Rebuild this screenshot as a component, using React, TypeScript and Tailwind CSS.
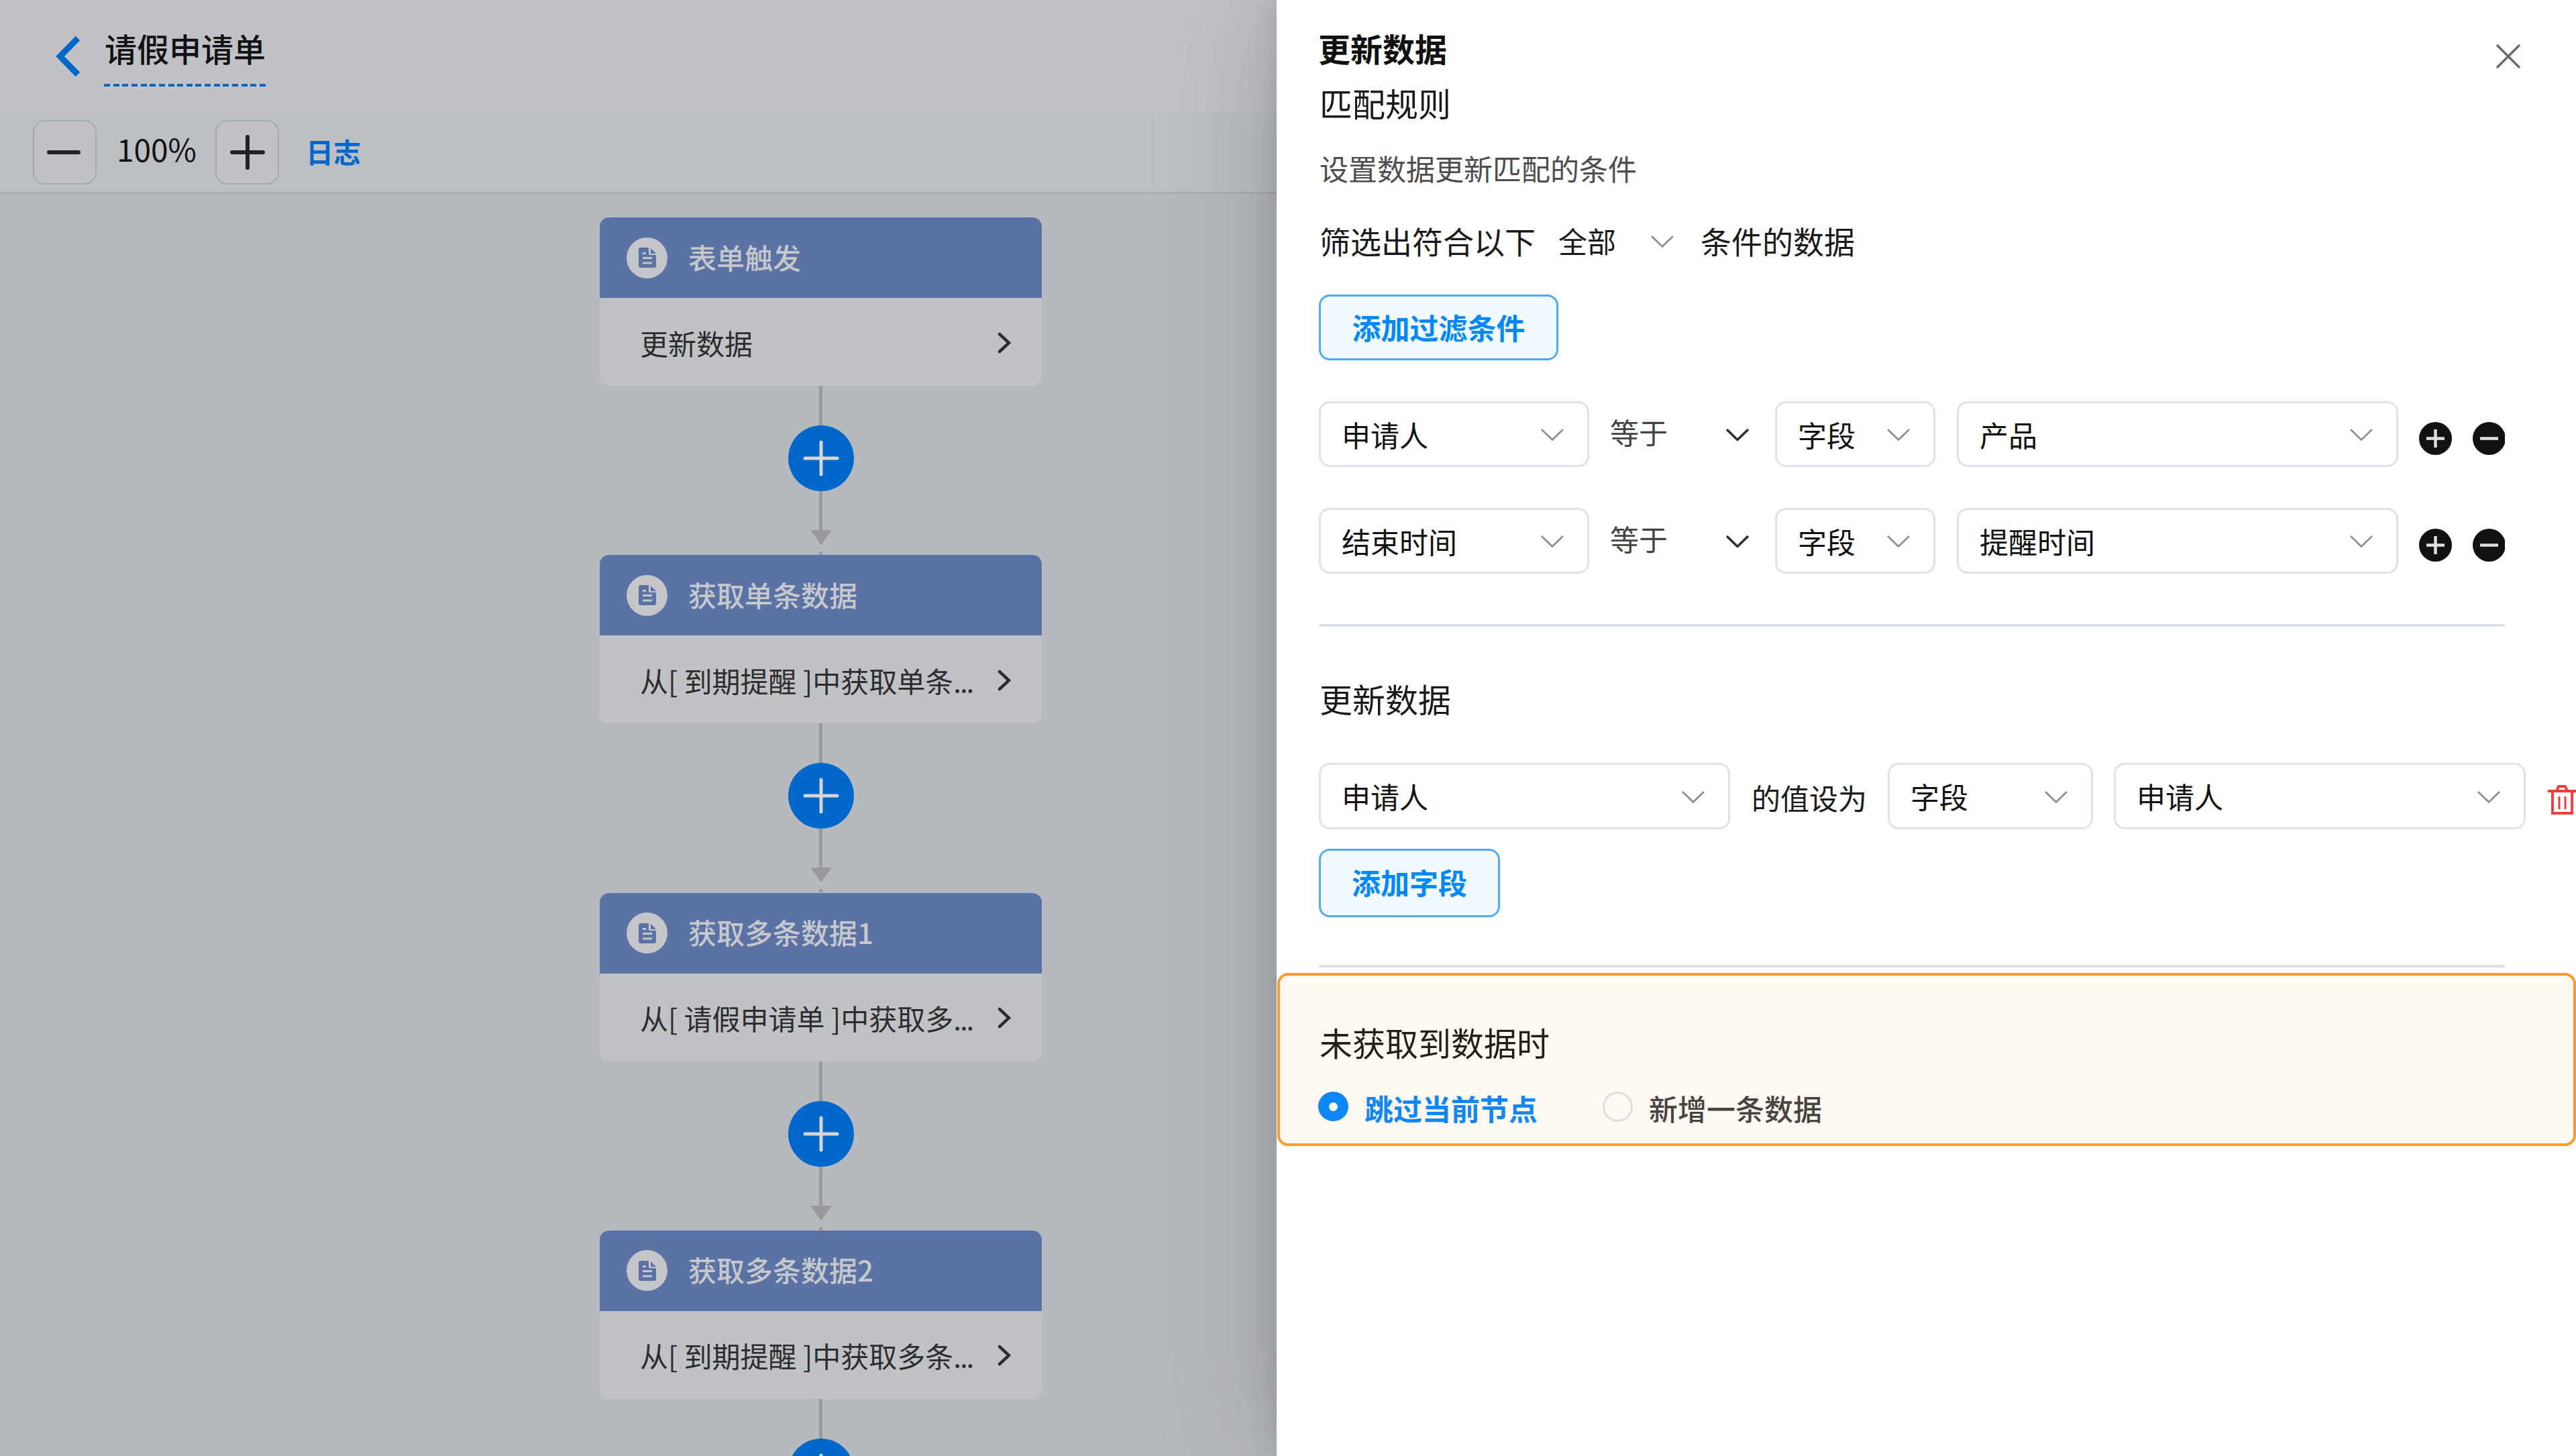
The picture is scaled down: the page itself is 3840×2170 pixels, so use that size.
import type { ReactNode } from 'react';

const nodes = [
  { title: '表单触发', desc: '更新数据' },
  { title: '获取单条数据', desc: '从[ 到期提醒 ]中获取单条', more: true },
  { title: '获取多条数据1', desc: '从[ 请假申请单 ]中获取多', more: true },
  { title: '获取多条数据2', desc: '从[ 到期提醒 ]中获取多条', more: true },
];

const rules = [
  { field: '申请人', value: '产品' },
  { field: '结束时间', value: '提醒时间' },
];

const DocIcon = () => (
  <svg width="26" height="30" viewBox="0 0 26 30">
    <path d="M3 0h12v9q0 2 2 2h9v16q0 3-3 3H3q-3 0-3-3V3q0-3 3-3z" fill="#5a72a4" />
    <path d="M18 1l8 8h-7q-1 0-1-1z" fill="#5a72a4" />
    <path d="M6 8.500h5M6 15.500h14M6 23h14" stroke="#c4c6c9" strokeWidth="3" />
  </svg>
);

const Chevron = ({ dark = false }: { dark?: boolean }) => (
  <svg width="34" height="18" viewBox="0 0 34 18" fill="none" className="shrink-0">
    <path d="M1 1l16 15.500L33 1" stroke={dark ? '#303133' : '#8c8c8c'} strokeWidth={dark ? 3.6 : 2.6} />
  </svg>
);

const Select = ({ className, children }: { className: string; children: ReactNode }) => (
  <div
    className={`flex shrink-0 items-center justify-between rounded-[16px] border-[3px] border-[#dfe2ea] bg-white pr-[35px] pl-[31px] text-[43px] leading-none text-[#111] ${className}`}
  >
    <span>{children}</span>
    <div className="mt-[2px]">
      <Chevron />
    </div>
  </div>
);

const AddButton = ({ className, children }: { className: string; children: ReactNode }) => (
  <button
    className={`flex items-center justify-center rounded-[16px] border-[3px] border-[#4cabff] bg-[#f2f9ff] text-[43px] leading-none font-bold text-[#0089ff] ${className}`}
  >
    <span>{children}</span>
  </button>
);

const Connector = () => (
  <div className="flex h-[252px] shrink-0 flex-col items-center">
    <div className="h-[59px] w-[5px] shrink-0 bg-[#97999d]" />
    <button className="flex h-[98px] w-[98px] shrink-0 items-center justify-center rounded-full bg-[#0068cb]">
      <svg width="54" height="54" viewBox="0 0 54 54">
        <path d="M3 27h48M27 3v48" stroke="#d8d6d6" strokeWidth="5" strokeLinecap="round" />
      </svg>
    </button>
    <div className="h-[58px] w-[5px] shrink-0 bg-[#97999d]" />
    <svg width="32" height="22" viewBox="0 0 32 22" className="shrink-0">
      <path d="M0 0h32L16 22z" fill="#97999d" />
    </svg>
    <div className="mt-[10px] h-[5px] w-[5px] shrink-0 bg-[#97999d]" />
  </div>
);

const FlowNode = ({ title, desc, more }: { title: string; desc: string; more?: boolean }) => (
  <div className="h-[251px] w-[659px] shrink-0 overflow-hidden rounded-[14px] bg-[#c1c2c5] text-[42px] leading-none">
    <div className="flex h-[120px] items-center bg-[#5a72a4] pl-[40px] text-[#c6c8cc]">
      <div className="flex h-[61px] w-[61px] items-center justify-center rounded-full bg-[#c4c6c9]">
        <DocIcon />
      </div>
      <span className="ml-[31px] pb-[3px] font-medium">{title}</span>
    </div>
    <div className="flex h-[131px] items-center justify-between pt-[2px] pr-[46px] pl-[60px] text-[#2c2d2f]">
      <span className="whitespace-nowrap">
        {desc}
        {more && <span className="tracking-[-2px]">...</span>}
      </span>
      <svg width="20" height="32" viewBox="0 0 20 32" fill="none" className="shrink-0">
        <path d="M3 3l14 13L3 29" stroke="#2c2d2f" strokeWidth="4.500" strokeLinecap="round" />
      </svg>
    </div>
  </div>
);

const FlowPanel = () => (
  <div className="flex h-full w-[1903px] shrink-0 flex-col overflow-hidden bg-[#b6b9be]">
    <div className="flex h-[168px] shrink-0 items-start bg-[#c1c2c6] pl-[82px]">
      <svg width="40" height="64" viewBox="0 0 40 64" fill="none" className="mt-[52px]">
        <path d="M34 5L7.500 32L34 59" stroke="#0068cb" strokeWidth="9" />
      </svg>
      <div className="mt-[47px] ml-[33px] flex w-[241px] flex-col">
        <span className="h-[78px] pl-px text-[48px] leading-none font-medium whitespace-nowrap text-[#111214]">
          请假申请单
        </span>
        <div className="h-[4px] bg-[repeating-linear-gradient(90deg,#0068cb_0_9px,transparent_9px_13.65px)]" />
      </div>
    </div>

    <div className="flex h-[121px] shrink-0 items-center border-b-[3px] border-[#abadb1] bg-[#bcc0c3] pl-[49px]">
      <button className="flex h-[96px] w-[95px] items-center justify-center rounded-[18px] border-2 border-[#a5a9b4] bg-[#c1c2c6] pr-[3px]">
        <svg width="54" height="54" viewBox="0 0 54 54">
          <path d="M5 27h44" stroke="#212225" strokeWidth="6" strokeLinecap="round" />
        </svg>
      </button>
      <span className="flex w-[177px] justify-center pb-[12px] pl-[2px] text-[46px] leading-none text-[#111214]">100%</span>
      <button className="flex h-[96px] w-[95px] items-center justify-center rounded-[18px] border-2 border-[#a5a9b4] bg-[#c1c2c6]">
        <svg width="54" height="54" viewBox="0 0 54 54">
          <path d="M4 27h46M27 4v46" stroke="#212225" strokeWidth="6" strokeLinecap="round" />
        </svg>
      </button>
      <span className="ml-[40px] pb-[3px] text-[41px] leading-none font-bold text-[#0068cb]">日志</span>
    </div>

    <div className="flex min-h-0 flex-1 flex-col items-start overflow-hidden pt-[35px] pl-[894px]">
      {nodes.map((n) => (
        <div key={n.title} className="flex h-[503.300px] shrink-0 flex-col items-center">
          <FlowNode {...n} />
          <Connector />
        </div>
      ))}
    </div>
  </div>
);

const RoundIcon = ({ plus = false }: { plus?: boolean }) => (
  <svg width="49" height="49" viewBox="0 0 49 49" className="shrink-0">
    <circle cx="24.500" cy="24.500" r="24.500" fill="#111" />
    <path d={plus ? 'M11 24.500h27M24.500 11v27' : 'M11 24.500h27'} stroke="#dedede" strokeWidth="4.500" />
  </svg>
);

const RulePanel = () => (
  <div className="relative flex h-full w-[1937px] shrink-0 flex-col bg-white text-[#1a1a1a] shadow-[0_0_40px_rgba(0,0,0,0.12),0_0_180px_rgba(0,0,0,0.18)]">
    <div className="flex flex-col pt-[48px] pl-[63px]">
      <div className="flex h-[48px] items-start justify-between pr-[82px]">
        <h1 className="-ml-px text-[48px] leading-[47px] font-bold text-[#111]">更新数据</h1>
        <svg width="38" height="38" viewBox="0 0 38 38" className="mt-[17px]">
          <path d="M2 2l34 34M36 2L2 36" stroke="#666a72" strokeWidth="3.400" />
        </svg>
      </div>
      <h2 className="mt-[32px] pl-px text-[49px] leading-[50px]">匹配规则</h2>
      <p className="mt-[51px] pl-px text-[43px] leading-none text-[#4d4d4d]">设置数据更新匹配的条件</p>

      <div className="mt-[63px] flex h-[46px] items-center pl-px text-[46px] leading-none">
        <span>筛选出符合以下</span>
        <span className="ml-[34px] text-[43px]">全部</span>
        <div className="mt-[3px] ml-[52px]">
          <Chevron />
        </div>
        <span className="ml-[40px]">条件的数据</span>
      </div>

      <AddButton className="mt-[58px] h-[98px] w-[357px] pb-[2px]">添加过滤条件</AddButton>

      {rules.map((r) => (
        <div key={r.field} className="mt-[61px] flex h-[98px] items-center">
          <Select className="h-full w-[403px]">{r.field}</Select>
          <span className="ml-[31px] pb-[8px] text-[43px] leading-none text-[#444]">等于</span>
          <div className="mt-[2px] ml-[87px]">
            <Chevron dark />
          </div>
          <Select className="ml-[39px] h-full w-[239px]">字段</Select>
          <Select className="ml-[32px] h-full w-[658px]">{r.value}</Select>
          <div className="mt-[12px] ml-[31px] flex">
            <RoundIcon plus />
            <div className="ml-[31px] w-[48px] overflow-hidden">
              <RoundIcon />
            </div>
          </div>
        </div>
      ))}

      <div className="mt-[75px] h-[4px] w-[1768px] bg-[#dde0e7]" />

      <h2 className="mt-[83px] pl-px text-[49px] leading-[48px]">更新数据</h2>
      <div className="mt-[72px] flex h-[99px] items-center">
        <Select className="h-full w-[613px]">申请人</Select>
        <span className="mt-[4px] ml-[32px] w-[172px] shrink-0 text-[43px] leading-none whitespace-nowrap">的值设为</span>
        <Select className="ml-[31px] h-full w-[306px]">字段</Select>
        <Select className="ml-[31px] h-full w-[614px]">申请人</Select>
        <svg width="44" height="46" viewBox="0 0 44 46" fill="none" className="mt-[12px] ml-[33px] shrink-0">
          <path d="M0 9h44M13 9l3-7h10l3 7M7 9v33h29V9" stroke="#ec3d3a" strokeWidth="3.800" />
          <path d="M17 17v19M26 17v19" stroke="#ec3d3a" strokeWidth="3" />
        </svg>
      </div>

      <AddButton className="mt-[29px] h-[102px] w-[270px] pb-[3px]">添加字段</AddButton>
      <div className="mt-[71px] h-[4px] w-[1768px] bg-[#dde0e7]" />
    </div>

    <div className="mt-[8px] ml-px flex h-[258px] flex-col rounded-[16px] border-4 border-[#ff9a2e] bg-[#fef8f2] pt-[74px] pl-[57px]">
      <h2 className="pl-[2px] text-[49px] leading-[49px] text-[#231e18]">未获取到数据时</h2>
      <div className="mt-[48px] flex h-[48px] items-center text-[43px] leading-none">
        <div className="flex h-[44px] w-[45px] items-center justify-center rounded-full bg-[#0e87f8]">
          <div className="h-[13px] w-[13px] rounded-full bg-white" />
        </div>
        <span className="mt-[4px] ml-[24px] font-bold text-[#0e87f8]">跳过当前节点</span>
        <div className="ml-[97px] h-[45px] w-[45px] rounded-full border-[3px] border-[#e0dedc]" />
        <span className="mt-[4px] ml-[24px] font-medium text-[#48433e]">新增一条数据</span>
      </div>
    </div>
  </div>
);

export default function App() {
  return (
    <div className="flex h-[2170px] w-[3840px] overflow-hidden font-['Noto_Sans_CJK_SC',sans-serif]">
      <FlowPanel />
      <RulePanel />
    </div>
  );
}
